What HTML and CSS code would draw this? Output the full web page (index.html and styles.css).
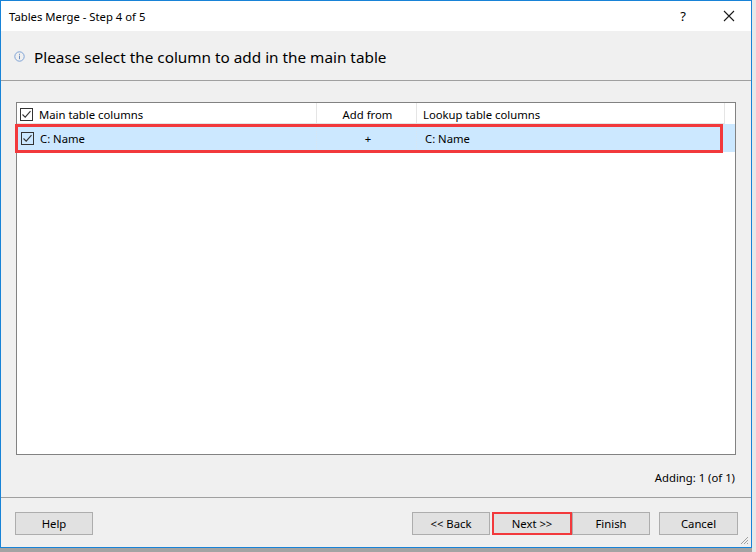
FILE: index.html
```html
<!DOCTYPE html>
<html>
<head>
<meta charset="utf-8">
<link rel="stylesheet" href="styles.css">
</head>
<body>
<div class="desk">
  <div class="window">
    <div class="titlebar">
      <span class="title">Tables Merge - Step 4 of 5</span>
      <span class="tb-btns">
        <span class="tb-help">?</span>
        <svg class="tb-close" width="12" height="12" viewBox="0 0 12 12"><path d="M1 1 L11 11 M11 1 L1 11" stroke="#1a1a1a" stroke-width="1.1" fill="none"/></svg>
      </span>
    </div>
    <div class="header">
      <svg class="info" width="11" height="11" viewBox="0 0 11 11"><circle cx="5.5" cy="5.5" r="4.7" fill="none" stroke="#7fa3d6" stroke-width="1"/><rect x="5" y="4.6" width="1" height="3.6" fill="#6f8fc0"/><rect x="5" y="2.8" width="1" height="1" fill="#6f8fc0"/></svg>
      <span class="header-text">Please select the column to add in the main table</span>
    </div>
    <div class="main">
      <div class="list">
        <div class="row head">
          <div class="cell c1"><span class="cb"><svg width="11" height="11" viewBox="0 0 11 11"><path d="M1.5 5.5 L4.2 8.2 L9.5 2.2" stroke="#333" stroke-width="1.1" fill="none"/></svg></span>Main table columns</div>
          <div class="cell c2">Add from</div>
          <div class="cell c3">Lookup table columns</div>
        </div>
        <div class="row data">
          <div class="cell c1"><span class="cb"><svg width="11" height="11" viewBox="0 0 11 11"><path d="M1.5 5.5 L4.2 8.2 L9.5 2.2" stroke="#333" stroke-width="1.1" fill="none"/></svg></span>C: Name</div>
          <div class="cell c2">+</div>
          <div class="cell c3">C: Name</div>
        </div>
        <div class="highlight"></div>
      </div>
      <div class="status">Adding: 1 (of 1)</div>
    </div>
    <div class="footer">
      <button class="btn">Help</button>
      <div class="spacer"></div>
      <button class="btn back">&lt;&lt; Back</button>
      <button class="btn next">Next &gt;&gt;</button>
      <button class="btn finish">Finish</button>
      <button class="btn cancel">Cancel</button>
    </div>
    <svg class="grip" width="9" height="9" viewBox="0 0 9 9"><path d="M8 1 L1 8 M8 4 L4 8 M8 7 L7 8" stroke="#a0a0a0" stroke-width="1"/></svg>
  </div>
</div>
</body>
</html>
```

FILE: styles.css
```css
* { box-sizing: border-box; }
html, body { margin: 0; padding: 0; }
body {
  width: 756px;
  height: 552px;
  overflow: hidden;
  background: #a3a3a3;
  font-family: "Noto Sans", "Open Sans", sans-serif;
  font-size: 11.3px;
  color: #000;
}
.desk {
  width: 756px;
  height: 552px;
  background: linear-gradient(to right, transparent 752px, #e8e8e8 752px);
}
.window {
  position: relative;
  width: 752px;
  height: 548px;
  border: 1px solid #1883d7;
  background: #f0f0f0;
  display: flex;
  flex-direction: column;
}
.titlebar {
  height: 30px;
  background: #fff;
  display: flex;
  align-items: center;
  padding-left: 8px;
  flex-shrink: 0;
}
.title { flex: 1; }
.tb-btns { display: flex; align-items: center; }
.tb-help { font-size: 13px; margin-right: 37px; }
.tb-close { margin-right: 16px; }
.header {
  height: 50px;
  border-bottom: 1px solid #a0a0a0;
  display: flex;
  align-items: center;
  padding-left: 13px;
  padding-top: 2px;
  flex-shrink: 0;
}
.info { margin-right: 9px; }
.header-text { font-size: 15.3px; }
.main {
  flex: 1;
  padding: 21px 15px 0 15px;
  border-bottom: 1px solid #a0a0a0;
  display: flex;
  flex-direction: column;
}
.list {
  position: relative;
  height: 353px;
  background: #fff;
  border: 1px solid #828282;
}
.row { display: flex; }
.row.head { height: 21px; padding-top: 2px; }
.row.head .cell {
  border-right: 1px solid #e5e5e5;
  border-bottom: 1px solid #e5e5e5;
  margin-top: -2px;
  padding-top: 2px;
}
.row.data { height: 28px; background: #cce8ff; }
.row.data .cell { border-right: 1px dotted #d6e6f3; }
.cell {
  display: flex;
  align-items: center;
  white-space: nowrap;
}
.c1 { width: 300px; padding-left: 3px; }
.c2 { width: 100px; justify-content: center; }
.c3 { width: 308px; padding-left: 6px; }
.row.head .c2 { padding-left: 2px; }
.row.data .c2 { padding-left: 3px; }
.row.data .c3 { padding-left: 8px; border-right: none; }
.row.data .c1 { padding-left: 4px; }
.cb {
  width: 13px;
  height: 13px;
  border: 1px solid #333;
  background: #fff;
  margin-right: 6px;
  display: flex;
  align-items: center;
  justify-content: center;
}
.row.data .cb { background: transparent; }
.highlight {
  position: absolute;
  left: -2px;
  top: 21px;
  width: 708px;
  height: 29px;
  border: 3px solid #f2393c;
}
.status {
  text-align: right;
  padding-top: 15px;
  padding-right: 1px;
}
.footer {
  height: 49px;
  display: flex;
  align-items: flex-start;
  padding: 14px 13px 0 14px;
  flex-shrink: 0;
}
.spacer { flex: 1; }
.btn {
  width: 78px;
  height: 23px;
  background: #e1e1e1;
  border: 1px solid #adadad;
  font-family: inherit;
  font-size: 11.3px;
  color: #000;
  padding: 0;
  margin: 0;
  flex-shrink: 0;
}
.btn.next { border: 2px solid #f2393c; width: 80px; margin-left: 2px; }
.btn.finish { margin-left: 0; }
.btn.cancel { width: 79px; margin-left: 9px; }
.grip { position: absolute; right: 2px; bottom: 2px; }
```
